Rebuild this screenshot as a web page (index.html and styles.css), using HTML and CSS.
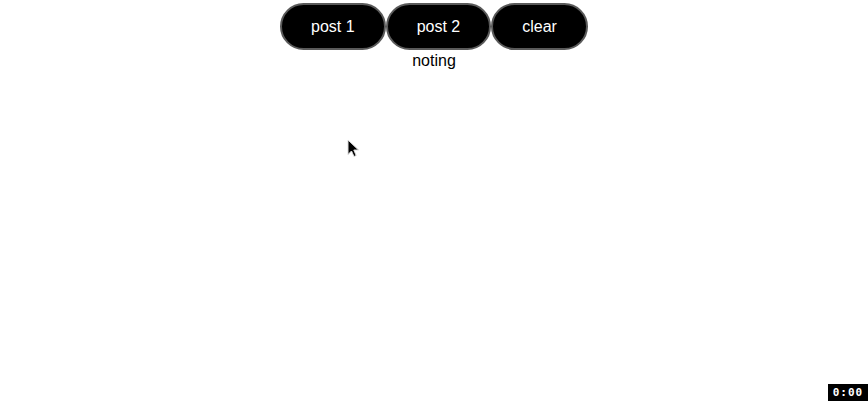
FILE: index.html
```html
<!DOCTYPE html>
<html>
<head>
<meta charset="utf-8">
<link rel="stylesheet" href="styles.css">
</head>
<body>
<div class="app">
  <div class="buttons">
    <button class="btn">post 1</button>
    <button class="btn">post 2</button>
    <button class="btn">clear</button>
  </div>
  <div class="status">noting</div>
</div>
<svg class="cursor" width="13" height="20" viewBox="0 0 13 20">
  <path d="M1 1 L1 15.5 L4.5 12 L7 17.5 L9.2 16.5 L6.8 11 L11.5 11 Z" fill="#000" stroke="#ddd" stroke-width="1"/>
</svg>
<div class="timer">0:00</div>
</body>
</html>
```
FILE: styles.css
```css
html, body {
  margin: 0;
  padding: 0;
  background: #fff;
  width: 868px;
  height: 401px;
  overflow: hidden;
  position: relative;
}
.app {
  display: flex;
  flex-direction: column;
  align-items: center;
  padding-top: 3px;
  font-family: "Liberation Sans", Arial, sans-serif;
}
.buttons {
  display: flex;
}
.btn {
  background: #000;
  color: #fff;
  border: 2px solid #5a5a5a;
  border-radius: 24px;
  padding: 12px 29px;
  font-family: "Liberation Sans", Arial, sans-serif;
  font-size: 16px;
  line-height: 19px;
  margin: 0;
}
.status {
  font-size: 16px;
  line-height: 18px;
  margin-top: 2px;
  color: #000;
}
.cursor {
  position: absolute;
  left: 347px;
  top: 139px;
}
.timer {
  position: absolute;
  right: 0;
  bottom: 0;
  width: 40px;
  height: 17px;
  background: #000;
  color: #fff;
  font-family: "DejaVu Sans Mono", monospace;
  font-size: 11px;
  font-weight: bold;
  line-height: 17px;
  text-align: center;
  letter-spacing: 1px;
}
```
